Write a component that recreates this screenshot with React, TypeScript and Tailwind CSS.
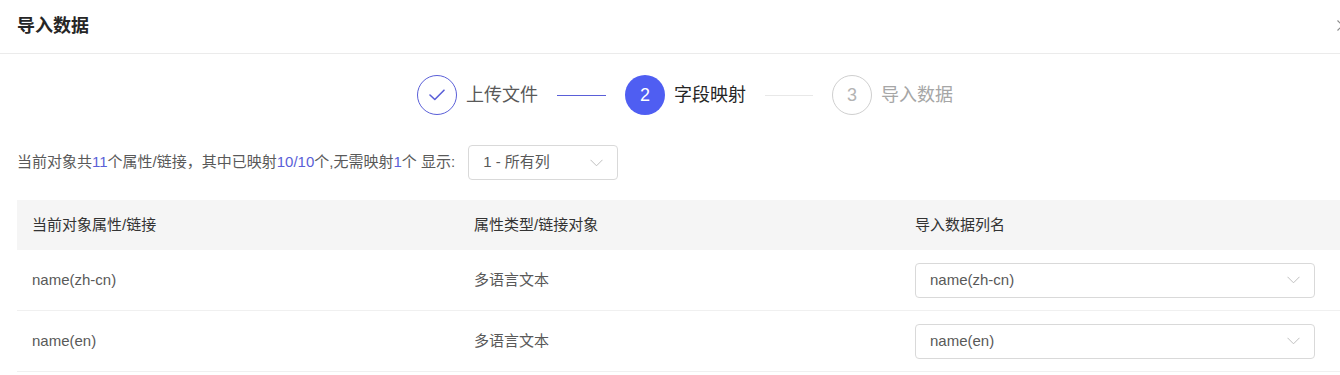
import React from "react";

const Chevron = ({ className = "" }: { className?: string }) => (
  <svg width="13" height="8" viewBox="0 0 13 8" className={className} fill="none">
    <path d="M0.5 0.8 L6.5 6.8 L12.5 0.8" stroke="#bfbfbf" strokeWidth="1" />
  </svg>
);

const Check = () => (
  <svg width="16" height="12" viewBox="0 0 16 12" fill="none">
    <path d="M1 6 L5.8 10.5 L15 1.2" stroke="#5a5fd8" strokeWidth="1.6" strokeLinecap="round" strokeLinejoin="round" />
  </svg>
);

const rows = [
  { name: "name(zh-cn)", type: "多语言文本", col: "name(zh-cn)" },
  { name: "name(en)", type: "多语言文本", col: "name(en)" },
];

export default function App() {
  return (
    <div
      className="w-[1340px] h-[375px] overflow-hidden bg-white"
      style={{ fontFamily: '"Liberation Sans", "Noto Sans CJK SC", sans-serif' }}
    >
      <div className="w-[1370px]">
        {/* header */}
        <div className="relative h-[54px] border-b border-[#ebebeb] flex items-center px-[17px]">
          <h1 className="text-[18px] font-bold text-[#262626]">导入数据</h1>
          <svg className="absolute left-[1337px] top-[20px]" width="11" height="11" viewBox="0 0 11 11" fill="none">
            <path d="M0.5 0.5 L10.5 10.5 M10.5 0.5 L0.5 10.5" stroke="#8c8c8c" strokeWidth="1.2" />
          </svg>
        </div>

        {/* steps */}
        <div className="flex items-center justify-center h-[82px]">
          <div className="w-[40px] h-[40px] rounded-full border border-[#5a5fd8] flex items-center justify-center">
            <Check />
          </div>
          <span className="ml-[9px] text-[18px] text-[#595959]">上传文件</span>
          <div className="mx-[19px] w-[49px] h-px bg-[#5a5fd8]" />
          <div className="w-[40px] h-[40px] rounded-full bg-[#4f5ef2] flex items-center justify-center text-white text-[18px]">2</div>
          <span className="ml-[9px] text-[18px] text-[#262626]">字段映射</span>
          <div className="mx-[19px] w-[48px] h-px bg-[#e8e8e8]" />
          <div className="w-[40px] h-[40px] rounded-full border border-[#cfcfcf] flex items-center justify-center text-[#b3b3b3] text-[18px]">3</div>
          <span className="ml-[9px] text-[18px] text-[#a6a6a6]">导入数据</span>
        </div>

        {/* info line */}
        <div className="px-[17px] pt-[9px] flex items-center text-[15px] text-[#595959]">
          <span>
            当前对象共<span className="text-[#5a5fd8]">11</span>个属性/链接，其中已映射<span className="text-[#5a5fd8]">10/10</span>个,无需映射<span className="text-[#5a5fd8]">1</span>个 显示:
          </span>
          <div className="ml-[13px] w-[150px] h-[35px] border border-[#d9d9d9] rounded-[4px] flex items-center justify-between pl-[14px] pr-[14px]">
            <span className="text-[15px] text-[#595959]">1 - 所有列</span>
            <Chevron />
          </div>
        </div>

        {/* table */}
        <div className="px-[17px] mt-[20px]">
          <div className="grid grid-cols-[442px_441px_1fr] h-[50px] bg-[#f5f5f5] items-center text-[15px] text-[#333333]">
            <div className="pl-[15px]">当前对象属性/链接</div>
            <div className="pl-[15px]">属性类型/链接对象</div>
            <div className="pl-[15px]">导入数据列名</div>
          </div>
          {rows.map((r) => (
            <div
              key={r.name}
              className="grid grid-cols-[442px_441px_1fr] h-[61px] items-center border-b border-[#f0f0f0] text-[15px] text-[#595959]"
            >
              <div className="pl-[15px]">{r.name}</div>
              <div className="pl-[15px]">{r.type}</div>
              <div className="pl-[15px]">
                <div className="w-[400px] h-[35px] border border-[#d9d9d9] rounded-[4px] flex items-center justify-between pl-[14px] pr-[14px]">
                  <span>{r.col}</span>
                  <Chevron />
                </div>
              </div>
            </div>
          ))}
        </div>
      </div>
    </div>
  );
}
